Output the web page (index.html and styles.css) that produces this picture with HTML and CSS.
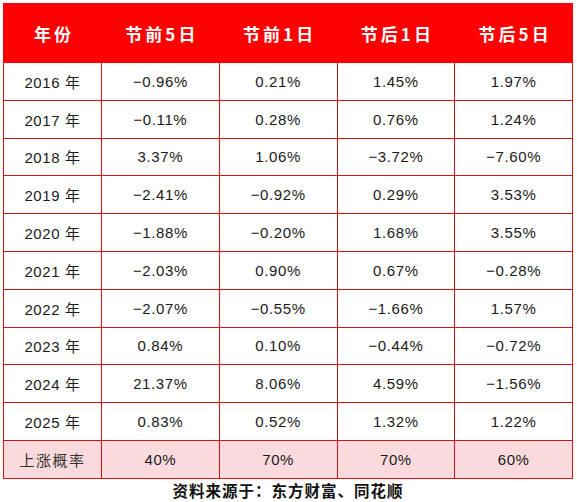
FILE: index.html
```html
<!DOCTYPE html>
<html lang="zh">
<head>
    <meta charset="UTF-8">
    <title>节前节后涨跌</title>
    <link rel="stylesheet" href="styles.css">
</head>
<body>
    <div class="wrap">
        <table class="stats">
            <thead>
                <tr>
                    <th class="c-year">年份</th>
                    <th>节前5日</th>
                    <th>节前1日</th>
                    <th>节后1日</th>
                    <th>节后5日</th>
                </tr>
            </thead>
            <tbody>
                <tr><td>2016 年</td><td>−0.96%</td><td>0.21%</td><td>1.45%</td><td>1.97%</td></tr>
                <tr><td>2017 年</td><td>−0.11%</td><td>0.28%</td><td>0.76%</td><td>1.24%</td></tr>
                <tr><td>2018 年</td><td>3.37%</td><td>1.06%</td><td>−3.72%</td><td>−7.60%</td></tr>
                <tr><td>2019 年</td><td>−2.41%</td><td>−0.92%</td><td>0.29%</td><td>3.53%</td></tr>
                <tr><td>2020 年</td><td>−1.88%</td><td>−0.20%</td><td>1.68%</td><td>3.55%</td></tr>
                <tr><td>2021 年</td><td>−2.03%</td><td>0.90%</td><td>0.67%</td><td>−0.28%</td></tr>
                <tr><td>2022 年</td><td>−2.07%</td><td>−0.55%</td><td>−1.66%</td><td>1.57%</td></tr>
                <tr><td>2023 年</td><td>0.84%</td><td>0.10%</td><td>−0.44%</td><td>−0.72%</td></tr>
                <tr><td>2024 年</td><td>21.37%</td><td>8.06%</td><td>4.59%</td><td>−1.56%</td></tr>
                <tr><td>2025 年</td><td>0.83%</td><td>0.52%</td><td>1.32%</td><td>1.22%</td></tr>
                <tr class="rate"><td class="label">上涨概率</td><td>40%</td><td>70%</td><td>70%</td><td>60%</td></tr>
            </tbody>
        </table>
        <div class="source">资料来源于：东方财富、同花顺</div>
    </div>
</body>
</html>
```

FILE: styles.css
```css
body{
    margin: 0;
    background-color: white;
}

.wrap{
    padding: 3px 4px 0 3px;
}

.stats{
    width: 570px;
    border-collapse: collapse;
    table-layout: fixed;
    font-family: "Liberation Sans", "Noto Sans CJK SC", sans-serif;
    font-size: 15px;
    color: #1a1a1a;
}

.stats th{
    background-color: #ff0000;
    color: white;
    height: 58px;
    font-family: "Noto Sans CJK SC", sans-serif;
    font-weight: bold;
    font-size: 17px;
    letter-spacing: 3px;
    border: 1px solid #ff0000;
    padding: 0 0 0 3px;
}

.stats th.c-year{
    width: 94px;
}

.stats td{
    height: 36.8px;
    text-align: center;
    border: 1px solid #d81018;
    padding: 0;
    letter-spacing: 0.6px;
}

.rate td{
    background-color: #fadadd;
}

.rate .label{
    font-family: "Noto Sans CJK SC", sans-serif;
    letter-spacing: 1.5px;
    color: #333;
}

.source{
    width: 570px;
    text-align: center;
    font-family: "Noto Sans CJK SC", sans-serif;
    font-weight: bold;
    font-size: 15.5px;
    letter-spacing: 1px;
    color: #111;
    line-height: 22px;
}
```
